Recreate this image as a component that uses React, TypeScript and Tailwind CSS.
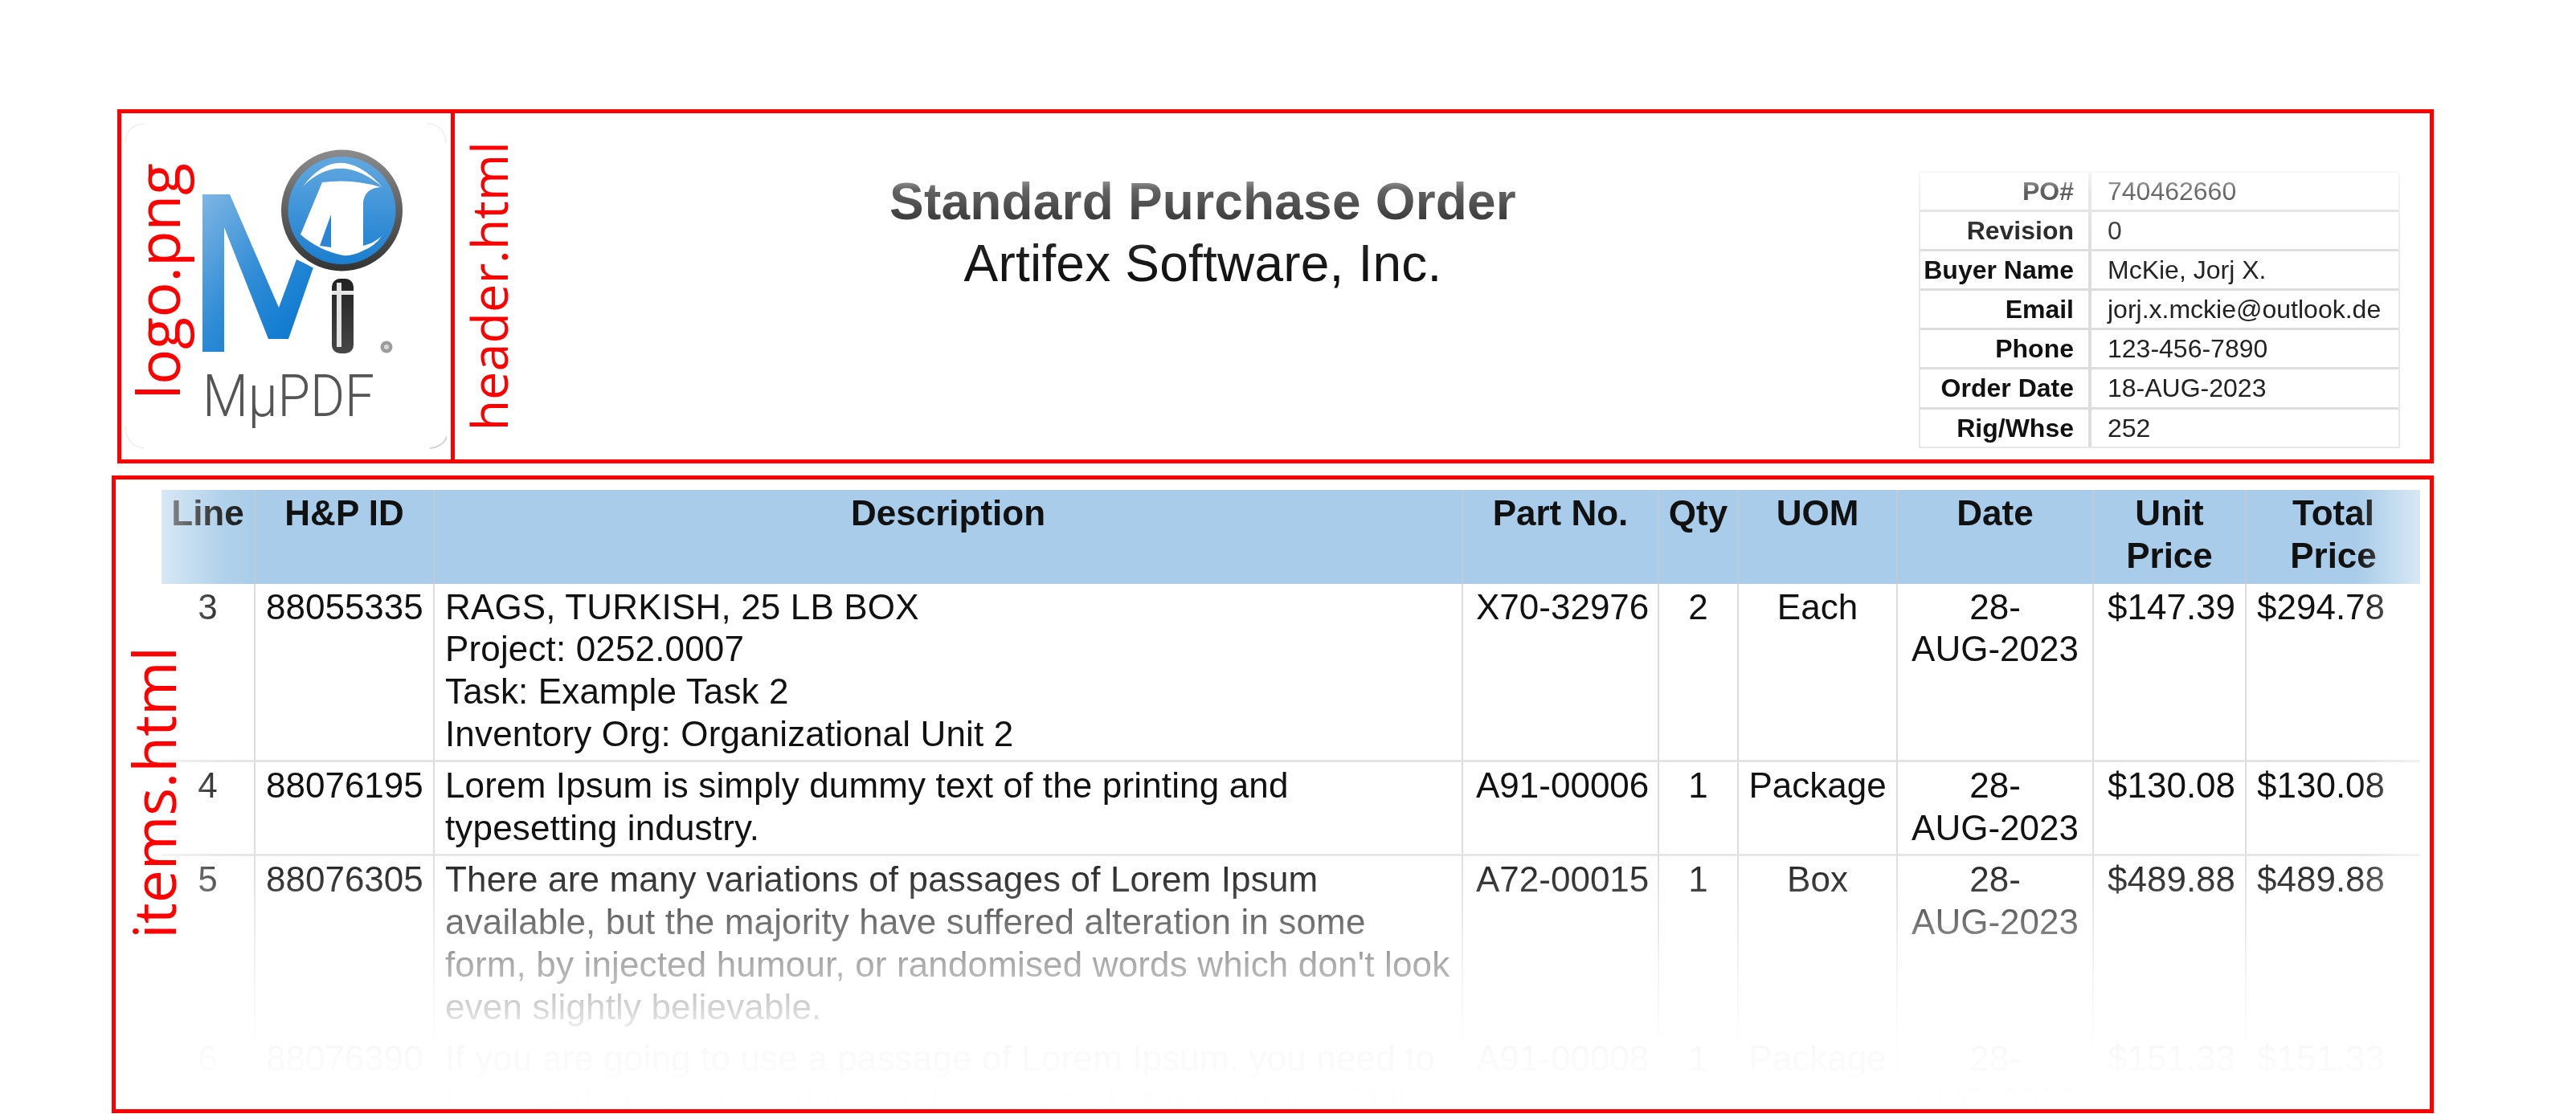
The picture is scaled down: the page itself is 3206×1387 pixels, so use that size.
import React from 'react';

interface ItemRow {
  line: string;
  id: string;
  description: string[];
  part: string;
  qty: string;
  uom: string;
  unit: string;
  total: string;
}

const orderInfo = [
  ['PO#', '740462660'],
  ['Revision', '0'],
  ['Buyer Name', 'McKie, Jorj X.'],
  ['Email', 'jorj.x.mckie@outlook.de'],
  ['Phone', '123-456-7890'],
  ['Order Date', '18-AUG-2023'],
  ['Rig/Whse', '252'],
];

const rows: ItemRow[] = [
  {
    line: '3',
    id: '88055335',
    description: ['RAGS, TURKISH, 25 LB BOX', 'Project: 0252.0007', 'Task: Example Task 2', 'Inventory Org: Organizational Unit 2'],
    part: 'X70-32976',
    qty: '2',
    uom: 'Each',
    unit: '$147.39',
    total: '$294.78',
  },
  {
    line: '4',
    id: '88076195',
    description: ['Lorem Ipsum is simply dummy text of the printing and', 'typesetting industry.'],
    part: 'A91-00006',
    qty: '1',
    uom: 'Package',
    unit: '$130.08',
    total: '$130.08',
  },
  {
    line: '5',
    id: '88076305',
    description: [
      'There are many variations of passages of Lorem Ipsum',
      'available, but the majority have suffered alteration in some',
      "form, by injected humour, or randomised words which don't look",
      'even slightly believable.',
    ],
    part: 'A72-00015',
    qty: '1',
    uom: 'Box',
    unit: '$489.88',
    total: '$489.88',
  },
  {
    line: '6',
    id: '88076390',
    description: ['If you are going to use a passage of Lorem Ipsum, you need to', "be sure there isn't anything embarrassing hidden in the middle"],
    part: 'A91-00008',
    qty: '1',
    uom: 'Package',
    unit: '$151.33',
    total: '$151.33',
  },
];

const thClass = 'border-r-2 border-[#bfcbd6] px-[11px] pt-[3px] pb-[8px] align-top text-center font-bold';
const tdClass = 'border-r-2 border-b-[3px] border-r-[#dcdcdc] border-b-[#e4e4e4] px-[11px] pt-[3px] pb-[5.5px] align-top';

function Logo() {
  return (
    <svg width="405" height="431" viewBox="152 141 405 431" className="blur-[0.6px]">
      <defs>
        <linearGradient id="mFill" x1="0" y1="0" x2="0.8" y2="1">
          <stop offset="0" stopColor="#7fb6e3" />
          <stop offset="0.55" stopColor="#2f8bd6" />
          <stop offset="1" stopColor="#0a78cf" />
        </linearGradient>
        <linearGradient id="rimFill" x1="0" y1="0" x2="0" y2="1">
          <stop offset="0" stopColor="#8c8c8c" />
          <stop offset="1" stopColor="#333333" />
        </linearGradient>
        <linearGradient id="lensFill" x1="0" y1="0" x2="0" y2="1">
          <stop offset="0" stopColor="#62a8e0" />
          <stop offset="1" stopColor="#1b7ed0" />
        </linearGradient>
        <linearGradient id="handleFill" x1="0" y1="0" x2="0" y2="1">
          <stop offset="0" stopColor="#222222" />
          <stop offset="1" stopColor="#474747" />
        </linearGradient>
      </defs>
      <path d="M157 178 Q158 155 181 154 M556 178 Q555 155 532 154" fill="none" stroke="#f0f0f0" strokeWidth="1.5" />
      <path d="M157 530 Q158 556 181 558" fill="none" stroke="#eeeeee" strokeWidth="1.5" />
      <path d="M560 530 Q559 556 536 558" fill="none" stroke="#d4d4d4" strokeWidth="2" />
      <path d="M253 242 L287 242 L348 383 L370 323 L391 333 L360 422 L335 422 L280 283 L280 438 L253 438 Z" fill="url(#mFill)" />
      <circle cx="426.5" cy="262" r="80" fill="#ffffff" />
      <circle cx="426.5" cy="262" r="75.5" fill="url(#rimFill)" />
      <circle cx="426.5" cy="262" r="67" fill="url(#lensFill)" />
      <path d="M378 232 Q423 173 477 233 Q423 187 378 232 Z" fill="#ffffff" />
      <path d="M402 227 Q440 222 475 233 Q455 234 453 252 L453 306 Q466 303 476 294 Q468 306 453 312 Q440 319 428 318 Q398 312 375 292 Z" fill="#ffffff" />
      <path d="M413 267 L399 306 L413 308 Z" fill="#2a86d4" />
      <rect x="414" y="347" width="27" height="93" rx="10" fill="url(#handleFill)" />
      <rect x="414" y="362" width="27" height="5" fill="#e8e8e8" />
      <path d="M420 352 L426 352 L426 432 L420 432 Z" fill="#e4e4e4" />
      <circle cx="482" cy="432" r="7.5" fill="#9c9c9c" />
      <circle cx="482" cy="432" r="3" fill="#d8d8d8" />
      <text x="253" y="518" fontFamily="Roboto, sans-serif" fontWeight="300" fontSize="72" fill="#555555" textLength="214" lengthAdjust="spacingAndGlyphs">
        MμPDF
      </text>
    </svg>
  );
}

function OrderTable() {
  return (
    <table className="w-[599px] table-fixed border-separate border-spacing-0 border-2 border-[#e8e8e8] text-[32px] leading-[38.4px] blur-[0.5px]">
      <colgroup>
        <col className="w-[213px]" />
        <col />
      </colgroup>
      <tbody>
        {orderInfo.map(([label, value], i) => (
          <tr key={label}>
            <td className={`border-r-[4px] border-[#dddddd] pr-[18px] pt-[4px] pb-[3.7px] text-right font-bold whitespace-nowrap text-[#111] ${i < orderInfo.length - 1 ? 'border-b-[3px]' : ''}`}>
              {label}
            </td>
            <td className={`border-[#dddddd] pl-[20px] pt-[4px] pb-[3.7px] whitespace-nowrap text-[#222] ${i < orderInfo.length - 1 ? 'border-b-[3px]' : ''}`}>
              {value}
            </td>
          </tr>
        ))}
      </tbody>
    </table>
  );
}

function ItemsTable() {
  return (
    <table className="w-[2811px] table-fixed border-separate border-spacing-0 text-[44px] leading-[52.8px] text-[#111] blur-[0.6px]">
      <colgroup>
        <col className="w-[117px]" />
        <col className="w-[223px]" />
        <col className="w-[1280px]" />
        <col className="w-[244px]" />
        <col className="w-[99px]" />
        <col className="w-[198px]" />
        <col className="w-[244px]" />
        <col className="w-[190px]" />
        <col className="w-[216px]" />
      </colgroup>
      <thead>
        <tr className="bg-[#a8cce9]">
          <th className={thClass}>Line</th>
          <th className={thClass}>H&amp;P ID</th>
          <th className={thClass}>Description</th>
          <th className={thClass}>Part No.</th>
          <th className={thClass}>Qty</th>
          <th className={thClass}>UOM</th>
          <th className={thClass}>Date</th>
          <th className={thClass}>
            Unit
            <br />
            Price
          </th>
          <th className="px-[11px] pt-[3px] pb-[8px] align-top text-center font-bold">
            Total
            <br />
            Price
          </th>
        </tr>
      </thead>
      <tbody>
        {rows.map((row) => (
          <tr key={row.line}>
            <td className={`${tdClass} text-center`}>{row.line}</td>
            <td className={`${tdClass} pl-[13px]`}>{row.id}</td>
            <td className={`${tdClass} pl-[13px] tracking-[0.15px] whitespace-nowrap`}>
              {row.description.map((text) => (
                <div key={text}>{text}</div>
              ))}
            </td>
            <td className={`${tdClass} pl-[16px] whitespace-nowrap`}>{row.part}</td>
            <td className={`${tdClass} text-center`}>{row.qty}</td>
            <td className={`${tdClass} text-center`}>{row.uom}</td>
            <td className={`${tdClass} text-center`}>
              28-
              <br />
              AUG-2023
            </td>
            <td className={`${tdClass} pl-[17px]`}>{row.unit}</td>
            <td className="border-b-[3px] border-[#e4e4e4] pl-[13px] pr-[11px] pt-[3px] pb-[5.5px] align-top">{row.total}</td>
          </tr>
        ))}
      </tbody>
    </table>
  );
}

export default function App() {
  return (
    <div className="h-[1387px] w-[3206px] overflow-hidden bg-white pt-[136px] pl-[139px] font-['Liberation_Sans',Arial,sans-serif]">
      {/* header.html frame */}
      <section className="relative ml-[7px] flex h-[441px] w-[2883px] border-[5px] border-[#ff0000]">
        <div className="relative h-full w-[415px] shrink-0 border-r-[5px] border-[#ff0000]">
          <Logo />
          <span className="absolute left-[2px] top-[62px] font-['Open_Sans',sans-serif] text-[73px] leading-[86px] text-[#ff0000] [writing-mode:vertical-rl] rotate-180">
            logo.png
          </span>
        </div>
        <div className="relative flex flex-1 items-start pt-[72px] pr-[37px] pl-[40px]">
          <div className="flex-1 text-center text-[64px] leading-[77px] tracking-[0.2px] text-[#111] blur-[0.5px]">
            <div className="font-bold">Standard Purchase Order</div>
            <div>Artifex Software, Inc.</div>
          </div>
          <OrderTable />
          {/* soft fade along the top of the page */}
          <div className="pointer-events-none absolute inset-x-0 top-0 h-[210px] bg-[linear-gradient(180deg,rgba(255,255,255,0.95)_60px,rgba(255,255,255,0.35)_95px,rgba(255,255,255,0.12)_145px,rgba(255,255,255,0)_200px)]" />
          <span className="absolute left-[1px] top-[35px] font-['Open_Sans',sans-serif] text-[63px] leading-[82px] text-[#ff0000] [writing-mode:vertical-rl] rotate-180">
            header.html
          </span>
        </div>
      </section>

      {/* items.html frame */}
      <section className="relative mt-[15px] h-[794px] w-[2890px] overflow-hidden border-[5px] border-[#ff0000] pt-[13px] pl-[57px]">
        <ItemsTable />
        <div className="pointer-events-none absolute inset-y-0 left-[57px] w-[120px] bg-[linear-gradient(90deg,rgba(255,255,255,0.55),rgba(255,255,255,0.3)_35%,rgba(255,255,255,0.12)_60%,rgba(255,255,255,0))]" />
        <div className="pointer-events-none absolute inset-y-0 right-[12px] w-[80px] bg-[linear-gradient(270deg,rgba(255,255,255,0.55),rgba(255,255,255,0))]" />
        <div className="pointer-events-none absolute inset-0 bg-[linear-gradient(180deg,rgba(255,255,255,0)_440px,rgba(255,255,255,0.15)_498px,rgba(255,255,255,0.4)_551px,rgba(255,255,255,0.65)_603px,rgba(255,255,255,0.82)_658px,rgba(255,255,255,0.95)_690px,rgba(255,255,255,0.975)_713px,rgba(255,255,255,0.995)_766px)]" />
        <span className="absolute left-[6px] top-[208px] font-['Open_Sans',sans-serif] text-[73px] leading-[82px] text-[#ff0000] [writing-mode:vertical-rl] rotate-180">
          items.html
        </span>
      </section>
    </div>
  );
}
